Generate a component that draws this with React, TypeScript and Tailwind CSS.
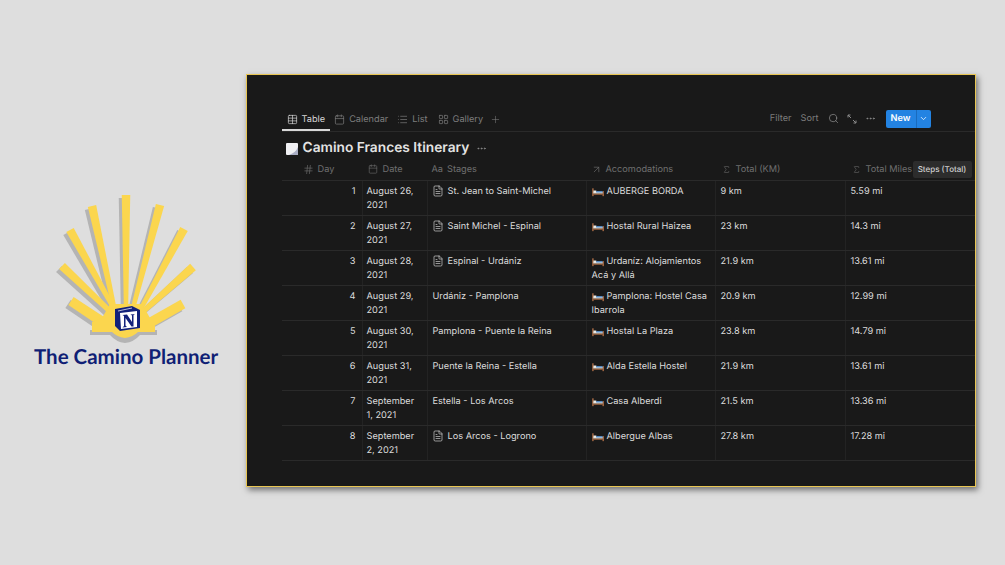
import React from "react";
import { Table, Calendar, List, LayoutGrid, Plus, Search, MoreHorizontal, ChevronDown, ArrowUpRight, Hash, Sigma, FileText } from "lucide-react";

const rays: number[][] = [
  [126, 195, 126, 316, 8.5, 4],
  [160, 205, 131, 316, 8.5, 4],
  [184, 229, 137, 316, 8.5, 4],
  [193, 267, 138, 316, 8.5, 5],
  [183, 304, 146, 325, 9.5, 10],
  [92, 206, 116, 316, 8.5, 4],
  [70, 230, 118, 316, 8.5, 4],
  [62, 266, 115, 316, 8.5, 5],
  [71, 301, 104, 323, 9.5, 10],
];

function rayPoints(r: number[], dx = 0, dy = 0) {
  const [x1, y1, x2, y2, w, b2] = r;
  const len = Math.hypot(x2 - x1, y2 - y1);
  const nx = -(y2 - y1) / len;
  const ny = (x2 - x1) / len;
  const a = w / 2;
  const b = b2 / 2;
  return [
    [x1 + nx * a + dx, y1 + ny * a + dy],
    [x2 + nx * b + dx, y2 + ny * b + dy],
    [x2 - nx * b + dx, y2 - ny * b + dy],
    [x1 - nx * a + dx, y1 - ny * a + dy],
  ].map((p) => p.join(",")).join(" ");
}

function Logo() {
  return (
    <svg width="200" height="155" viewBox="30 190 200 155" className="block">
      <g fill="#b4b4b4">
        {rays.map((r, i) => <polygon key={i} points={rayPoints(r, -3, 3)} />)}
        <path d="M90 330 L157 330 L157 335 L140 335 Q134 342 125 343 Q116 342 110 335 L90 335 Z" />
      </g>
      <g fill="#fbd64e">
        {rays.map((r, i) => <polygon key={i} points={rayPoints(r)} />)}
        <path d="M110 304 L142 304 L150 318 L155 322 L155 332 L138 332 Q133 337 125 338 Q117 337 112 332 L92 332 L92 322 L102 318 Z" />
      </g>
      <g>
        <path d="M115 309 L132 306 L140 310 L140 328 L120 331 L115 326 Z" fill="#12217a" />
        <path d="M120 313 L137 311 L137 327 L121 329 Z" fill="#fff" />
        <path d="M122.5 315 L127 314.5 L132 322 L132 315.5 L130.5 314.5 L135 314 L133.5 315 L133.5 326.5 L131.5 326.5 L125.5 318 L125.5 325.5 L127 327 L122.5 327.5 L124 326 L124 316 Z" fill="#12217a" />
        <path d="M118 311 L132 308" stroke="#fff" strokeWidth="0.7" />
      </g>
    </svg>
  );
}

function Bed() {
  return (
    <svg width="12" height="10" viewBox="0 0 13 10" className="shrink-0">
      <rect x="0.3" y="1" width="1.4" height="8.5" fill="#b9744a" />
      <rect x="11.4" y="4" width="1.4" height="5.5" fill="#b9744a" />
      <rect x="1.5" y="3.4" width="3.2" height="2" fill="#f1ede6" />
      <rect x="1.5" y="5" width="10" height="1.8" fill="#e9e6e0" />
      <rect x="4.5" y="4" width="7" height="1.6" fill="#5b93cf" />
      <rect x="1.5" y="6.8" width="10" height="1.2" fill="#a0643f" />
    </svg>
  );
}

function PageIcon() {
  return (
    <svg width="12" height="12" viewBox="0 0 12 12" className="shrink-0">
      <rect x="0" y="0" width="12" height="12" rx="1" fill="#f0f0f3" />
      <path d="M3 12 L11 12 Q12 12 12 11 L12 4 Q10 9.5 3 12 Z" fill="#a9adc4" />
    </svg>
  );
}

function ExpandIcon() {
  return (
    <svg width="10" height="10" viewBox="0 0 10 10" fill="none" stroke="#8b8b8b" strokeWidth="1">
      <path d="M1 3.5 L1 1 L3.5 1 M1 1 L4 4" />
      <path d="M9 6.5 L9 9 L6.5 9 M9 9 L6 6" />
    </svg>
  );
}

type Row = { day: number; date: [string, string]; stage: string; doc: boolean; acc: [string, string?]; km: string; mi: string };
const rows: Row[] = [
  { day: 1, date: ["August 26,", "2021"], stage: "St. Jean to Saint-Michel", doc: true, acc: ["AUBERGE BORDA"], km: "9 km", mi: "5.59 mi" },
  { day: 2, date: ["August 27,", "2021"], stage: "Saint Michel - Espinal", doc: true, acc: ["Hostal Rural Haizea"], km: "23 km", mi: "14.3 mi" },
  { day: 3, date: ["August 28,", "2021"], stage: "Espinal - Urdániz", doc: true, acc: ["Urdaníz: Alojamientos", "Acá y Allá"], km: "21.9 km", mi: "13.61 mi" },
  { day: 4, date: ["August 29,", "2021"], stage: "Urdániz - Pamplona", doc: false, acc: ["Pamplona: Hostel Casa", "Ibarrola"], km: "20.9 km", mi: "12.99 mi" },
  { day: 5, date: ["August 30,", "2021"], stage: "Pamplona - Puente la Reina", doc: false, acc: ["Hostal La Plaza"], km: "23.8 km", mi: "14.79 mi" },
  { day: 6, date: ["August 31,", "2021"], stage: "Puente la Reina - Estella", doc: false, acc: ["Alda Estella Hostel"], km: "21.9 km", mi: "13.61 mi" },
  { day: 7, date: ["September", "1, 2021"], stage: "Estella - Los Arcos", doc: false, acc: ["Casa Alberdi"], km: "21.5 km", mi: "13.36 mi" },
  { day: 8, date: ["September", "2, 2021"], stage: "Los Arcos - Logrono", doc: true, acc: ["Albergue Albas"], km: "27.8 km", mi: "17.28 mi" },
];

const grid = "grid grid-cols-[80px_65px_159px_129px_130px_130px]";

function Tab({ icon, label, active }: { icon: React.ReactNode; label: string; active?: boolean }) {
  return (
    <div className={`flex items-center gap-[4px] h-[22px] px-[5px] -mb-px border-b-2 leading-[11px] ${active ? "border-[#d8d8d8] text-[#d6d6d6]" : "border-transparent text-[#7d7d7d]"}`}>
      {icon}
      <span className="pt-[1px]">{label}</span>
    </div>
  );
}

export default function App() {
  return (
    <div className="w-[1005px] h-[565px] overflow-hidden bg-[#dedede] flex font-['Inter','Liberation_Sans',sans-serif] [text-rendering:geometricPrecision]">
      <div className="w-[246px] shrink-0 flex flex-col pt-[190px] pl-[30px]">
        <Logo />
        <div className="font-['Lato',sans-serif] font-bold text-[20.5px] leading-[26px] text-[#101f75] whitespace-nowrap -mt-[1px] ml-[4px]">The Camino Planner</div>
      </div>
      <div className="relative mt-[74px] w-[730px] h-[413px] bg-[#191919] border-[1.5px] border-[#e9c653] shadow-[2px_3px_6px_rgba(0,0,0,0.5)] pl-[34.5px] pt-[33px] text-[9.2px] overflow-hidden">
        <div className="w-[695px] flex items-center h-[24px] border-b border-[#2a2a2a]">
          <Tab active icon={<Table size={11} strokeWidth={1.5} />} label="Table" />
          <div className="-ml-[1px]"><Tab icon={<Calendar size={11} strokeWidth={1.5} />} label="Calendar" /></div>
          <div className="-ml-[1px]"><Tab icon={<List size={11} strokeWidth={1.5} />} label="List" /></div>
          <div><Tab icon={<LayoutGrid size={11} strokeWidth={1.5} />} label="Gallery" /></div>
          <Plus size={11} strokeWidth={1.2} className="text-[#7d7d7d] ml-[2px]" />
          <div className="ml-auto flex items-center text-[#7d7d7d] mr-[46px] -mt-[2px]">
            <span>Filter</span>
            <span className="ml-[9px]">Sort</span>
            <Search size={11} strokeWidth={1.4} className="ml-[9px] text-[#9a9a9a]" />
            <span className="ml-[8px]"><ExpandIcon /></span>
            <MoreHorizontal size={11} className="ml-[8px] text-[#8b8b8b]" />
            <div className="ml-[10px] flex items-center h-[18px] rounded-[2px] bg-[#2383e2] text-white font-semibold">
              <span className="w-[30px] text-center">New</span>
              <span className="w-[15px] h-full flex items-center justify-center border-l border-[#1a6bbd]"><ChevronDown size={9} strokeWidth={2} /></span>
            </div>
          </div>
        </div>

        <div className="flex items-center h-[29px] pt-[4px] pl-[4px] text-[13.75px] font-semibold text-[#e3e3e3]">
          <PageIcon />
          <span className="ml-[5px]">Camino Frances Itinerary</span>
          <MoreHorizontal size={11} className="ml-[7px] text-[#8b8b8b]" />
        </div>

        <div className={`${grid} h-[20px] items-center border-b border-[#2a2a2a] text-[#6f6f6f] w-[693px] pb-[3px] leading-[11px]`}>
          <div className="flex items-center pl-[21px] gap-[4px]"><Hash size={11} strokeWidth={1.4} />Day</div>
          <div className="flex items-center pl-[6px] gap-[5px]"><Calendar size={10} strokeWidth={1.4} />Date</div>
          <div className="flex items-center pl-[5px] gap-[4px]"><span className="text-[9.2px]">Aa</span>Stages</div>
          <div className="flex items-center pl-[5px] gap-[4px]"><ArrowUpRight size={11} strokeWidth={1.4} />Accomodations</div>
          <div className="flex items-center pl-[7px] gap-[5px]"><Sigma size={9} strokeWidth={1.4} />Total (KM)</div>
          <div className="flex items-center pl-[7px] gap-[5px]"><Sigma size={9} strokeWidth={1.4} />Total Miles</div>
        </div>

        <div>
        {rows.map((r) => (
          <div key={r.day} className={`${grid} h-[35px] border-b border-[#2a2a2a] text-[#dcdcdc] leading-[13.5px] w-[693px]`}>
            <div className="text-right pr-[6px] pt-[4px]">{r.day}</div>
            <div className="pl-[4px] pt-[4px] border-l border-[#232323]"><div>{r.date[0]}</div><div>{r.date[1]}</div></div>
            <div className="pl-[5px] pt-[4px] border-l border-[#232323] flex items-start">
              {r.doc && <FileText size={12} strokeWidth={1.3} className="mr-[4px] -ml-[1px] shrink-0" />}
              <span className="whitespace-nowrap">{r.stage}</span>
            </div>
            <div className="pl-[5px] pt-[4px] border-l border-[#232323]">
              <div className="flex items-center gap-[3px] whitespace-nowrap"><Bed />{r.acc[0]}</div>
              {r.acc[1] && <div className="whitespace-nowrap">{r.acc[1]}</div>}
            </div>
            <div className="pl-[5px] pt-[4px] border-l border-[#232323]">{r.km}</div>
            <div className="pl-[5px] pt-[4px] border-l border-[#232323]">{r.mi}</div>
          </div>
        ))}
        </div>

        <div className="absolute left-[665.5px] top-[85.5px] h-[17px] w-[59px] rounded-[2px] bg-[#2c2c2c] text-[8px] font-medium text-[#cfcfcf] flex items-center justify-center whitespace-nowrap">Steps (Total)</div>
      </div>
    </div>
  );
}
